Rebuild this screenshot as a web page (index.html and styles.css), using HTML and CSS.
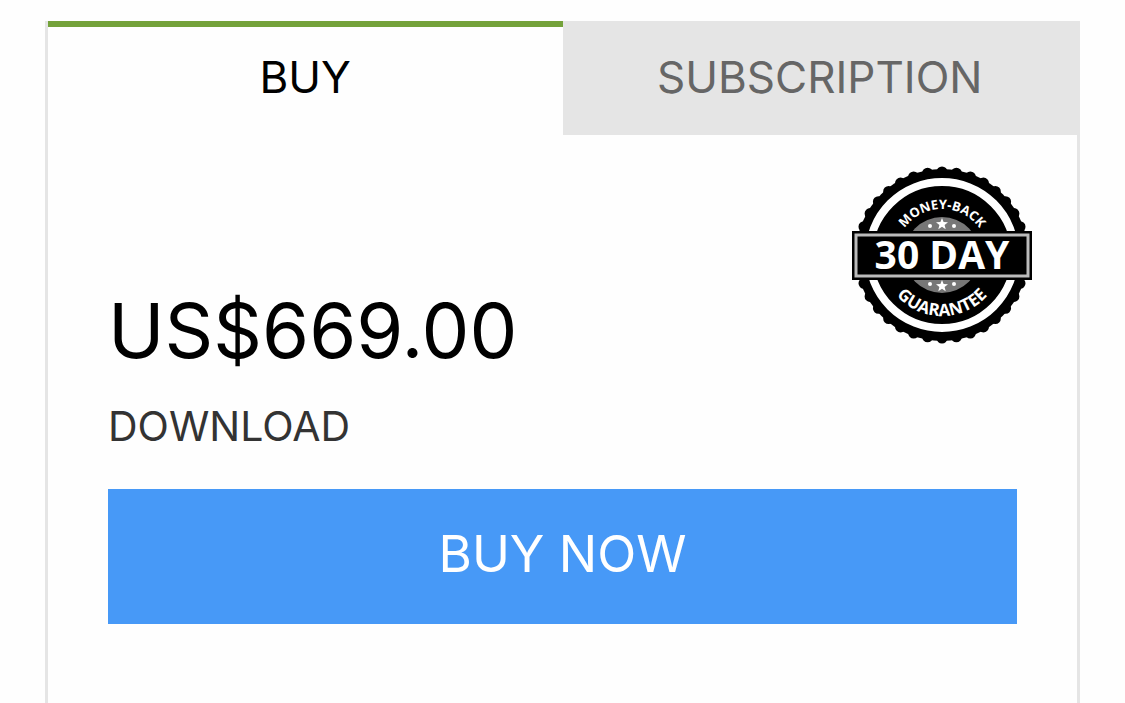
FILE: index.html
```html
<!DOCTYPE html>
<html lang="en">
<head>
    <meta charset="UTF-8">
    <meta name="viewport" content="width=device-width, initial-scale=1.0">
    <title>Buy</title>
    <link rel="stylesheet" href="styles.css">
</head>
<body>
    <main class="panel">
        <div class="tabs" role="tablist">
            <button class="tab active" type="button" role="tab" aria-selected="true">BUY</button>
            <button class="tab" type="button" role="tab" aria-selected="false">SUBSCRIPTION</button>
        </div>
        <div class="offer">
            <div class="offer-top">
                <div class="price">US$669.00</div>
                <svg class="seal" viewBox="0 0 180 180" role="img">
                    <defs>
                        <path id="arc-top" d="M44 90a46 46 0 0 1 92 0"/>
                        <path id="arc-bottom" d="M29 90a61 61 0 0 0 122 0"/>
                        <path id="star" d="M0-6 1.6-2 6-1.8 2.6 1 3.7 5.2 0 2.8-3.7 5.2-2.6 1-6-1.8-1.6-2z"/>
                    </defs>
                    <!-- scalloped edge -->
                    <circle cx="90" cy="90" r="86"/>
                    <circle class="scallops" cx="90" cy="90" r="83" pathLength="360" transform="rotate(-90 90 90)"/>
                    <circle class="ring" cx="90" cy="90" r="73"/>
                    <circle cx="90" cy="90" r="38" fill="#777"/>
                    <g fill="#fff">
                        <use href="#star" x="90" y="59"/>
                        <circle cx="78" cy="61" r="2"/>
                        <circle cx="102" cy="61" r="2"/>
                        <use href="#star" x="90" y="121"/>
                        <circle cx="78" cy="119" r="2"/>
                        <circle cx="102" cy="119" r="2"/>
                    </g>
                    <rect x="0" y="66" width="180" height="49"/>
                    <rect class="frame" x="4" y="70" width="172" height="41"/>
                    <text class="seal-days" x="90" y="104">30 DAY</text>
                    <text class="seal-top"><textPath href="#arc-top" startOffset="50%">MONEY-BACK</textPath></text>
                    <text class="seal-bottom"><textPath href="#arc-bottom" startOffset="50%">GUARANTEE</textPath></text>
                </svg>
            </div>
            <div class="format">DOWNLOAD</div>
            <button class="buy" type="button">BUY NOW</button>
        </div>
    </main>
</body>
</html>
```
FILE: styles.css
```css
* {
    box-sizing: border-box;
}
body {
    margin: 0;
    padding: 21px 45px 0;
    min-height: 100vh;
    display: flex;
    flex-direction: column;
    font-family: Inter, "Liberation Sans", sans-serif;
    background-color: #fefefe;
}
button {
    font-family: inherit;
    border: none;
    cursor: pointer;
}
.panel {
    flex: 1;
    border: solid #e5e5e5;
    border-width: 0 3px;
}
.tabs {
    display: flex;
}
.tab {
    flex: 1 1 0;
    padding: 23px 0 31px;
    border-top: 6px solid #e5e5e5;
    background-color: #e5e5e5;
    color: #666;
    font-size: 44px;
    line-height: 54px;
}
.tab.active {
    border-top-color: #74a23a;
    background-color: #fefefe;
    color: #000;
}
.offer {
    padding: 30px 60px 60px;
}
.offer-top {
    display: flex;
    justify-content: space-between;
    align-items: flex-end;
}
.price {
    font-size: 76px;
    line-height: 90px;
    color: #000;
}
.seal {
    width: 180px;
    height: 180px;
    margin: 0 -15px 30px 0;
}
.scallops {
    fill: none;
    stroke: #000;
    stroke-width: 11;
    stroke-linecap: round;
    stroke-dasharray: 0 10;
}
.ring {
    fill: none;
    stroke: #fff;
    stroke-width: 8;
}
.frame {
    fill: none;
    stroke: #bbb;
    stroke-width: 3;
}
.seal text {
    fill: #fff;
    font-family: "Open Sans", "Noto Sans", sans-serif;
    font-weight: 700;
    text-anchor: middle;
}
.seal .seal-days {
    font-size: 39px;
}
.seal .seal-top {
    font-size: 13px;
}
.seal .seal-bottom {
    font-size: 17px;
}
.format {
    margin-top: 24px;
    font-size: 41px;
    line-height: 54px;
    color: #333;
}
.buy {
    display: block;
    width: 100%;
    margin-top: 36px;
    padding: 35px 0 40px;
    background-color: #4799f7;
    color: #fff;
    font-size: 51px;
    font-weight: 400;
    line-height: 60px;
}
```
